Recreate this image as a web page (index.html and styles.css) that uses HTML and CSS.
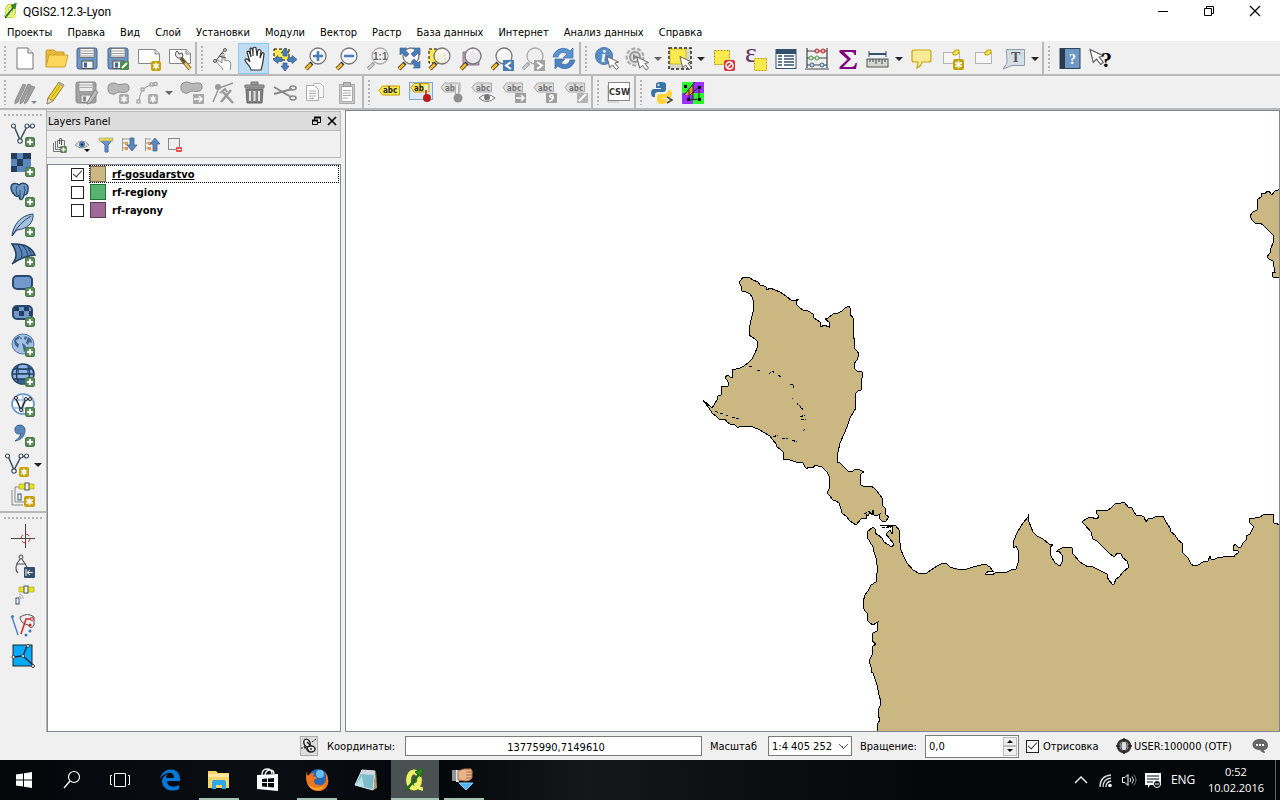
FILE: index.html
```html
<!DOCTYPE html>
<html lang="ru">
<head>
	<meta charset="UTF-8">
	<title>QGIS2.12.3-Lyon</title>
	<link rel="stylesheet" href="styles.css">
</head>
<body>
	<svg class="defs" aria-hidden="true">
		<defs>
			<symbol id="plus" viewBox="0 0 10 10"><rect x=".5" y=".5" width="9" height="9" rx="1.5" fill="#5a8c5a" stroke="#4a7a4a"/><path d="M5 2v6M2 5h6" stroke="#fff" stroke-width="2"/></symbol>
			<symbol id="star" viewBox="0 0 10 10"><rect width="10" height="10" rx="2" fill="#c4a000"/><path d="M5 1.5v7M2 3.2l6 3.6M8 3.2L2 6.8" stroke="#fff" stroke-width="1.5"/></symbol>
			<symbol id="star-off" viewBox="0 0 10 10"><rect width="10" height="10" rx="2" fill="#a8a8a8"/><path d="M5 1.5v7M2 3.2l6 3.6M8 3.2L2 6.8" stroke="#fff" stroke-width="1.5"/></symbol>
			<symbol id="lens" viewBox="0 0 24 24"><path d="M2 22l6-6" stroke="#333" stroke-width="4"/><path d="M2 22l5-5" stroke="#fcbd20" stroke-width="2.5"/><circle cx="14" cy="9" r="8" fill="#f4f4f4" fill-opacity=".85" stroke="#777" stroke-width="1.3"/><path d="M9 8a5 5 0 0 1 9-2" fill="none" stroke="#fff" stroke-width="2"/></symbol>
			<symbol id="lens-off" viewBox="0 0 24 24"><path d="M2 22l6-6" stroke="#999" stroke-width="3.5"/><path d="M2 22l5-5" stroke="#ccc" stroke-width="2"/><circle cx="14" cy="9" r="8" fill="#f0f0f0" stroke="#aaa" stroke-width="1.3"/></symbol>
			<symbol id="floppy" viewBox="0 0 24 24"><rect x="2" y="1" width="20" height="21" rx="2" fill="#6d97c4" stroke="#3f6797"/><rect x="5" y="1.5" width="14" height="9" fill="#fff" stroke="#777"/><path d="M6 4h12M6 6.5h12M6 9h12" stroke="#999"/><rect x="7" y="14" width="11" height="7.5" fill="#f4f4f4" stroke="#555"/><rect x="9" y="15.5" width="3" height="5" fill="#3f6797"/></symbol>
			<symbol id="floppy-off" viewBox="0 0 24 24"><rect x="1" y="1" width="20" height="21" rx="2" fill="#a2a2a2" stroke="#8b8b8b"/><rect x="4" y="1.5" width="14" height="9" fill="#ececec" stroke="#999"/><path d="M5 4h12M5 6.5h12" stroke="#aaa"/><rect x="6" y="14" width="10" height="7.5" fill="#eee" stroke="#888"/><rect x="8" y="15.5" width="3" height="5" fill="#888"/></symbol>
			<symbol id="tag-off" viewBox="0 0 24 24"><path d="M1 6.5L4.5 2H20.5V11H4.5z" fill="#ddd" stroke="#aaa"/><text x="5" y="10" class="t-abc" fill="#777">abc</text></symbol>
			<symbol id="cursor" viewBox="0 0 14 16"><path d="M1 1l3 12 3-3 4 5 2.5-2-4-5 4-1z" fill="#fff" stroke="#555"/></symbol>
			<symbol id="vec" viewBox="0 0 24 24"><path d="M3 3l6 14L16 3.5h5" fill="none" stroke="#3c5064" stroke-width="1.5"/><g fill="#fff" stroke="#3c5064" stroke-width="1.2"><circle cx="2.5" cy="3" r="2"/><circle cx="9" cy="18" r="2.2"/><circle cx="16" cy="3" r="2"/><circle cx="21.5" cy="3" r="2"/></g></symbol>
			<symbol id="down" viewBox="0 0 8 4"><path d="M0 0h8L4 4z" fill="#222"/></symbol>
			<symbol id="down-off" viewBox="0 0 8 4"><path d="M0 0h8L4 4z" fill="#666"/></symbol>
			<symbol id="q" viewBox="0 0 24 24"><ellipse cx="11" cy="12" rx="5.5" ry="8" fill="none" stroke="#8a9a20" stroke-width="5.5"/><ellipse cx="11" cy="12" rx="5.5" ry="8" fill="none" stroke="#e9f26a" stroke-width="4.5"/><path d="M12 15q3 6 8 6" fill="none" stroke="#e9f26a" stroke-width="3.5"/><path d="M5 20L17 5" stroke="#1f6a18" stroke-width="2.5"/><path d="M20 0l-2 9-6-5z" fill="#2f8a20" stroke="#1f6a18"/><path d="M2 18l5 4-4 1z" fill="#1f6a18"/></symbol>
		</defs>
	</svg>

	<div class="window">
		<header class="title-bar">
			<svg class="logo"><use href="#q"/></svg>
			<h1>QGIS2.12.3-Lyon</h1>
			<div class="win-controls">
				<button aria-label="Свернуть"><svg viewBox="0 0 12 12"><path d="M1 6.5h10" stroke="#000"/></svg></button>
				<button aria-label="Окно"><svg viewBox="0 0 12 12"><path d="M1.5 3.5h7v7h-7zM3.5 3.5v-2h7v7h-2" fill="none" stroke="#000"/></svg></button>
				<button aria-label="Закрыть"><svg viewBox="0 0 12 12"><path d="M1 1l10 10M11 1L1 11" stroke="#000" stroke-width="1.2"/></svg></button>
			</div>
		</header>

		<nav class="menu">
			<a href="#">Проекты</a>
			<a href="#">Правка</a>
			<a href="#">Вид</a>
			<a href="#">Слой</a>
			<a href="#">Установки</a>
			<a href="#">Модули</a>
			<a href="#">Вектор</a>
			<a href="#">Растр</a>
			<a href="#">База данных</a>
			<a href="#">Интернет</a>
			<a href="#">Анализ данных</a>
			<a href="#">Справка</a>
		</nav>

		<div class="toolbars">
			<div class="bar">
				<button aria-label="Новый"><svg viewBox="0 0 24 24"><path d="M4 1h11l5 5v16H4z" fill="#fff" stroke="#777"/><path d="M15 1v5h5" fill="#eee" stroke="#777"/></svg></button>
				<button aria-label="Открыть"><svg viewBox="0 0 24 24"><path d="M2 20V4l1-1h7l2 2h8v4" fill="#e8b83a" stroke="#c79a2a"/><path d="M2 20L5 8h19l-3 12z" fill="#fdd75a" stroke="#d0a52e"/></svg></button>
				<button aria-label="Сохранить"><svg><use href="#floppy"/></svg></button>
				<button aria-label="Сохранить как"><svg viewBox="0 0 24 24"><use href="#floppy"/><rect x="14" y="14" width="9" height="9" rx="1.5" fill="#4f8a4f"/><path d="M16 21l5-5" stroke="#fff" stroke-width="2"/></svg></button>
				<button aria-label="Новый макет"><svg viewBox="0 0 24 24"><path d="M1.5 2.5h17l4 4v10h-21z" fill="#fff" stroke="#888"/><path d="M18 2v5h5" fill="#ddd" stroke="#888"/><use href="#star" x="14" y="14" width="10" height="10"/></svg></button>
				<button aria-label="Управление макетами"><svg viewBox="0 0 24 24"><path d="M1.5 2.5h17l4 4v10h-21z" fill="#fff" stroke="#888"/><path d="M18 2v5h5" fill="#ddd" stroke="#888"/><path d="M9 4a4 4 0 1 0 6 5l-1-3-3 1-1-2z" fill="#e8e8e8" stroke="#555"/><path d="M13 11l9 11" stroke="#6b5a30" stroke-width="4"/><path d="M17 16l5 6" stroke="#f0c95a" stroke-width="2.5"/></svg></button>
			</div>
			<div class="bar">
				<button aria-label="Касание"><svg viewBox="0 0 24 24"><path d="M12 23c-1-4-5-5-7-9l2-1 4 3V7q1-2 2 0v6l5 1q3 1 1 9" fill="#fff" stroke="#888"/><path d="M4 15l6-8 4-5M8 9l7 2" fill="none" stroke="#444"/><g fill="#ddd" stroke="#555"><circle cx="14" cy="3" r="1.5"/><circle cx="4" cy="14" r="1.5"/></g></svg></button>
				<button class="on" aria-label="Рука"><svg viewBox="0 0 24 24"><path d="M9 23c0-4-5-6-6-10 1-2 3-1 5 2L5 5c1-2 3-1 4 5L8 2c1-2 3-1 3 7V1c1-1 3-1 3 0l1 8 1-6c1-1 3 0 3 1l-1 7 2-5c1-1 2 0 2 1-1 7-1 10-3 16z" fill="#fff" stroke="#333" stroke-width="1.2"/></svg></button>
				<button aria-label="К выделению"><svg viewBox="0 0 24 24"><path d="M1 2h15v11H1z" fill="#fce94f" stroke="#000" stroke-dasharray="3 2"/><path d="M12 1l4 5h-2v3h-4V6H8zM12 24l4-5h-2v-3h-4v3H8zM0 12.5l5-4v2h4v4H5v2zM24 12.5l-5-4v2h-4v4h4v2z" fill="#4a7cb8" stroke="#32598c" stroke-width=".7"/></svg></button>
				<button aria-label="Увеличить"><svg viewBox="0 0 24 24"><use href="#lens"/><path d="M14 4v10M9 9h10" stroke="#4a7cb8" stroke-width="2.5"/></svg></button>
				<button aria-label="Уменьшить"><svg viewBox="0 0 24 24"><use href="#lens"/><path d="M9 9h10" stroke="#4a7cb8" stroke-width="2.5"/></svg></button>
				<button aria-label="Масштаб 1:1"><svg viewBox="0 0 24 24"><use href="#lens-off"/><text x="7" y="13" class="t-one" fill="#666">1:1</text></svg></button>
				<button aria-label="Полный охват"><svg viewBox="0 0 24 24"><use href="#lens"/><path d="M3 1h7L8 3l4 4-3 3-4-4-2 2zM23 1h-7l2 2-4 4 3 3 4-4 2 2zM23 21h-7l2-2-4-4 3-3 4 4 2-2z" fill="#4a7cb8" stroke="#365f92" stroke-width=".6"/></svg></button>
				<button aria-label="Увеличить до выделенного"><svg viewBox="0 0 24 24"><path d="M1 2h16v14H1z" fill="#fce94f" stroke="#000" stroke-dasharray="3 2"/><use href="#lens"/></svg></button>
				<button aria-label="Увеличить до слоя"><svg viewBox="0 0 24 24"><path d="M4 5h16v13H4z" fill="#b9a9bc" stroke="#8d7a92"/><use href="#lens"/></svg></button>
				<button aria-label="Предыдущий охват"><svg viewBox="0 0 24 24"><use href="#lens"/><rect x="13" y="13" width="11" height="11" fill="#4a7cb8"/><path d="M21 15l-5 3.5 5 3.5" fill="none" stroke="#fff" stroke-width="2"/></svg></button>
				<button aria-label="Следующий охват"><svg viewBox="0 0 24 24"><use href="#lens-off"/><rect x="13" y="13" width="11" height="11" fill="#a4a4a4"/><path d="M16 15l5 3.5-5 3.5" fill="none" stroke="#fff" stroke-width="2"/></svg></button>
				<button aria-label="Обновить"><svg viewBox="0 0 24 24"><path d="M1 10C3 1 13-1 18 4l3-3v10H11l4-4C11 4 7 6 6 10z" fill="#5b93d0" stroke="#3c6ea8" stroke-width=".7"/><path d="M23 13c-2 9-12 11-17 6l-3 3V12h10l-4 4c4 3 8 1 9-3z" fill="#4a82c2" stroke="#3c6ea8" stroke-width=".7"/></svg></button>
			</div>
			<div class="bar">
				<button aria-label="Определить"><svg viewBox="0 0 24 24"><circle cx="9" cy="9" r="8.5" fill="#5a8cc4" stroke="#4677ae"/><text x="6" y="15" class="t-i" fill="#fff">i</text><use href="#cursor" x="11" y="8" width="13" height="16"/></svg></button>
				<button class="wide" aria-label="Действие"><svg viewBox="0 0 24 24"><circle cx="10" cy="10" r="8.500" fill="#e4e4e4" stroke="#aaa" stroke-width="2" stroke-dasharray="4 2"/><circle cx="10" cy="10" r="5" fill="#ddd" stroke="#999" stroke-width="2"/><path d="M8 7l5 3-5 3z" fill="#888"/><use href="#cursor" x="11" y="9" width="13" height="15"/></svg><svg class="drop"><use href="#down-off"/></svg></button>
				<button class="wide" aria-label="Выделить"><svg viewBox="0 0 24 24"><rect x="1" y="1" width="22" height="21" fill="#d8d8c8" stroke="#222" stroke-width="1.5" stroke-dasharray="3 2"/><rect x="2" y="2" width="16" height="15" fill="#fce94f" stroke="#c4a000" stroke-width=".6"/><use href="#cursor" x="11" y="8" width="13" height="16"/></svg><svg class="drop"><use href="#down"/></svg></button>
				<button aria-label="Снять выделение"><svg viewBox="0 0 24 24"><rect x="2.5" y="3.5" width="15" height="14" fill="#fce94f" stroke="#b89800" stroke-dasharray="2 1"/><rect x="12" y="13" width="11" height="11" rx="2" fill="#d9323c"/><circle cx="17.5" cy="18.5" r="3.5" fill="none" stroke="#fff" stroke-width="1.5"/><path d="M15 21l5-5" stroke="#fff" stroke-width="1.5"/></svg></button>
				<button aria-label="Выделить по выражению"><svg viewBox="0 0 24 24"><text x="2" y="15" class="t-eps" fill="#5c3566">ε</text><rect x="11.5" y="11.5" width="12" height="12" fill="#fce94f" stroke="#c4a000" stroke-dasharray="2 1"/></svg></button>
				<button aria-label="Таблица"><svg viewBox="0 0 24 24"><rect x="2" y="2.5" width="20" height="19" fill="#fff" stroke="#31506e"/><path d="M2 5h20" stroke="#31506e" stroke-width="4"/><path d="M4 9h4M10 9h10M4 12h4M10 12h10M4 15h4M10 15h10M4 18h4M10 18h10" stroke="#31506e" stroke-width="1.5"/></svg></button>
				<button aria-label="Калькулятор"><svg viewBox="0 0 24 24"><path d="M2 1v20M22 1v20M2 4h20M2 11h20M2 18h20M0 22h24" stroke="#444" stroke-width="1.2"/><g fill="#f3b1b1" stroke="#c01c1c"><circle cx="12" cy="4" r="2"/><circle cx="18" cy="4" r="2"/></g><g fill="#cdeccd" stroke="#4e9a4e"><circle cx="6" cy="11" r="2"/><circle cx="12" cy="11" r="2"/></g><g fill="#c3dcf3" stroke="#33658f"><circle cx="7" cy="18" r="2"/><circle cx="17" cy="18" r="2"/></g></svg></button>
				<button aria-label="Статистика"><svg viewBox="0 0 24 24"><path d="M3.5 3H20v5h-1.500Q18 5 15 5H8l7 7-8 8h8q4 0 4.500-4H21l-1 6H3.500v-2l8-7.500-8-7z" fill="#800080"/></svg></button>
				<button class="wide" aria-label="Измерить"><svg viewBox="0 0 24 24"><path d="M3 7h17" stroke="#31506e" stroke-width="2"/><path d="M3 4v6M20 4v6" stroke="#31506e"/><rect x="1" y="12" width="21" height="8" fill="#d3d7cf" stroke="#555"/><path d="M4 12v3M7 12v3M10 12v5M13 12v3M16 12v5M19 12v3" stroke="#444"/></svg><svg class="drop"><use href="#down"/></svg></button>
				<button aria-label="Подсказки"><svg viewBox="0 0 24 24"><path d="M4 3h15q2 0 2 2v8q0 2-2 2h-7c0 3-3 5-5 6l1-6H4q-2 0-2-2V5q0-2 2-2z" fill="#f8ea96" stroke="#c9a50a" stroke-width="1.2"/></svg></button>
				<button aria-label="Новая закладка"><svg viewBox="0 0 24 24"><path d="M2.500 5.500h16v11h-16z" fill="#f6f6f6" stroke="#777" stroke-dasharray="1 1"/><path d="M12 5h2V3h4v3l-3 2h-3z" fill="#fce94f" stroke="#c4a000"/><use href="#star" x="12" y="12" width="11" height="11"/></svg></button>
				<button aria-label="Закладки"><svg viewBox="0 0 24 24"><path d="M3.500 5.500h16v11h-16z" fill="#f6f6f6" stroke="#777" stroke-dasharray="1 1"/><path d="M13 5h2V3h4v3l-3 2h-3z" fill="#fce94f" stroke="#c4a000"/></svg></button>
				<button class="wide" aria-label="Аннотация"><svg viewBox="0 0 24 24"><path d="M4.500 2.500h18v16H10L1 22l4-6z" fill="#d5dfe8" stroke="#929ba4"/><text x="9" y="15" class="t-t" fill="#555">T</text></svg><svg class="drop"><use href="#down"/></svg></button>
			</div>
			<div class="bar last">
				<button aria-label="Справка"><svg viewBox="0 0 24 24"><rect x="2" y="1.500" width="20" height="20" fill="#6d97c4" stroke="#31445a"/><rect x="2" y="1.500" width="5" height="20" fill="#2b3b4d"/><text x="11" y="17" class="t-t" fill="#fff">?</text></svg></button>
				<button aria-label="Что это"><svg viewBox="0 0 24 24"><use href="#cursor" x="0" y="1" width="15" height="18"/><text x="12" y="20" class="t-q" fill="#000">?</text></svg></button>
			</div>
		</div>

		<div class="toolbars">
			<div class="bar edit">
				<button aria-label="Правки"><svg viewBox="0 0 24 24"><path d="M2 20l8-17 3 1-8 17-3 2zM7 20l8-17 3 1-8 17-3 2zM12 20l6-15 4 1-8 15-3 2z" fill="#a0a0a0" stroke="#888" stroke-width=".8"/><path d="M18 20h6l-3 3z" fill="#888"/></svg></button>
				<button aria-label="Режим правки"><svg viewBox="0 0 24 24"><path d="M4 17L15 1l5 3L9 20l-6 3z" fill="#f0d630" stroke="#8f7c20"/><path d="M17 3L6 19" stroke="#b89b14"/><path d="M15 1l5 3-1 2-5-3z" fill="#b0b0a8"/><path d="M4 17l5 3-6 3z" fill="#eedfb5" stroke="#777" stroke-width=".6"/></svg></button>
				<button aria-label="Сохранить правки"><svg viewBox="0 0 24 24"><use href="#floppy-off"/><path d="M13 20l7-11 3 2-7 11-4 1z" fill="#bbb" stroke="#888"/></svg></button>
				<button aria-label="Добавить объект"><svg viewBox="0 0 24 24"><path d="M2 7c0-5 6-6 9-4s11-3 12 3-6 6-10 5c-3 0-3 3-7 2s-4-3-4-6z" fill="#b8b8b8" stroke="#8b8b8b"/><use href="#star-off" x="13" y="13" width="10" height="10"/></svg></button>
				<button class="wide" aria-label="Добавить кривую"><svg viewBox="0 0 24 24"><path d="M3 20C4 9 9 6 15 4h6" fill="none" stroke="#999"/><g fill="#ddd" stroke="#999"><rect x="1" y="19" width="3" height="3"/><rect x="5" y="7" width="3" height="3"/><rect x="14" y="2" width="3" height="3"/><rect x="18" y="1.500" width="3" height="3"/></g><use href="#star-off" x="12" y="13" width="10" height="10"/></svg><svg class="drop"><use href="#down-off"/></svg></button>
				<button aria-label="Переместить объект"><svg viewBox="0 0 24 24"><path d="M1 6c0-5 6-6 9-4s11-3 12 3-6 6-10 5c-3 0-3 3-7 2s-4-3-4-6z" fill="#b8b8b8" stroke="#8b8b8b"/><rect x="13" y="13" width="11" height="10" fill="#a8a8a8"/><path d="M14 18h8M19 15l3 3-3 3" fill="none" stroke="#fff" stroke-width="1.500"/></svg></button>
				<button aria-label="Узлы"><svg viewBox="0 0 24 24"><path d="M2 21L8 7 22 2" fill="none" stroke="#999" stroke-width="1.500"/><circle cx="7" cy="6" r="3" fill="#999"/><path d="M10 21L20 9M12 11l10 11" stroke="#999" stroke-width="2.500"/><path d="M9 12l5-4 2 3" fill="none" stroke="#999" stroke-width="2"/></svg></button>
				<button aria-label="Удалить"><svg viewBox="0 0 24 24"><path d="M4 8h17l-1 14H5z" fill="#808080" stroke="#666"/><path d="M8 10v10M12.500 10v10M17 10v10" stroke="#e4e4e4" stroke-width="2"/><path d="M3 4h19v3H3zM9 4V1h7v3" fill="#999" stroke="#777"/></svg></button>
				<button aria-label="Вырезать"><svg viewBox="0 0 24 24"><path d="M1 6l17 10M1 13L19 8" stroke="#888" stroke-width="2"/><ellipse cx="20" cy="7" rx="3" ry="2" fill="none" stroke="#888" stroke-width="1.500"/><ellipse cx="20" cy="17" rx="3" ry="2" fill="none" stroke="#888" stroke-width="1.500"/></svg></button>
				<button aria-label="Копировать"><svg viewBox="0 0 24 24"><path d="M9.500 2.500h7l3 3v11h-10z" fill="#f6f6f6" stroke="#bbb"/><path d="M2.500 4.500h8l4 4v11h-12z" fill="#fff" stroke="#aaa"/><path d="M5 10h7M5 12.500h7M5 15h7M5 17.500h5" stroke="#aaa"/></svg></button>
				<button aria-label="Вставить"><svg viewBox="0 0 24 24"><rect x="4.500" y="3.500" width="15" height="19" fill="#ccc" stroke="#aaa"/><path d="M6.500 5.500h11v15h-11z" fill="#fff" stroke="#aaa"/><rect x="8.500" y="1.500" width="7" height="4" fill="#bbb" stroke="#999"/><path d="M8 9.500h8M8 12h8M8 14.500h8M8 17h5" stroke="#aaa"/></svg></button>
			</div>
			<div class="bar">
				<button aria-label="Подписи"><svg viewBox="0 0 24 24"><path d="M1 9.500L4.500 5H21.500V14H4.500z" fill="#fce94f" stroke="#c4a000"/><text x="5" y="12" class="t-abc" fill="#222">abc</text></svg></button>
				<button aria-label="Выделить подписи"><svg viewBox="0 0 24 24"><rect x=".5" y="1.500" width="23" height="17" fill="#dceaf7" stroke="#7da7dc"/><path d="M2 6.500L5 2.500H20V11H5z" fill="#fce94f" stroke="#c4a000"/><text x="5" y="10" class="t-abc" fill="#222">ab</text><path d="M17 4v11" stroke="#e8e8e8" stroke-width="3"/><path d="M17 9v7" stroke="#b01818" stroke-width="1.500"/><circle cx="18" cy="17" r="4" fill="#b81c1c"/></svg></button>
				<button aria-label="Закрепить подписи"><svg viewBox="0 0 24 24"><path d="M1 6.500L4.500 2H20V11H4.500z" fill="#ddd" stroke="#aaa"/><text x="5" y="10" class="t-abc" fill="#777">ab</text><path d="M17 4v11" stroke="#eee" stroke-width="3"/><path d="M15.500 4v11M18.500 4v11" stroke="#999" stroke-width=".7"/><circle cx="18" cy="17" r="4.500" fill="#909090"/></svg></button>
				<button aria-label="Показать подписи"><svg viewBox="0 0 24 24"><use href="#tag-off"/><path d="M8 17q8-7 16 0-8 7-16 0z" fill="#fff" stroke="#777"/><circle cx="16" cy="16.500" r="3" fill="#777"/></svg></button>
				<button aria-label="Переместить подпись"><svg viewBox="0 0 24 24"><use href="#tag-off"/><rect x="13" y="12" width="11" height="10" fill="#a0a0a0"/><path d="M14 17h8M19 14l3 3-3 3" fill="none" stroke="#fff" stroke-width="1.500"/></svg></button>
				<button aria-label="Повернуть подпись"><svg viewBox="0 0 24 24"><use href="#tag-off"/><rect x="13" y="12" width="11" height="10" fill="#a0a0a0"/><path d="M16 20c5 0 5-7 2-6s0 4 3 2" fill="none" stroke="#fff" stroke-width="1.500"/></svg></button>
				<button aria-label="Изменить подпись"><svg viewBox="0 0 24 24"><use href="#tag-off"/><rect x="13" y="12" width="11" height="10" fill="#b4b4b4"/><path d="M15 20l7-7" stroke="#fff" stroke-width="2"/></svg></button>
			</div>
			<div class="bar">
				<button aria-label="CSW"><svg viewBox="0 0 24 24"><path d="M1 4v17h11" fill="none" stroke="#bbb"/><rect x="1.500" y="1.500" width="21" height="18" fill="#fff" stroke="#888"/><text x="2" y="14" class="t-csw" fill="#333">CSW</text></svg></button>
			</div>
			<div class="bar last">
				<button aria-label="Python"><svg viewBox="0 0 24 24"><path d="M6 8V3q0-2 5-2t5 2v5q0 3-3 3H8q-3 0-3 3v2H3q-2-1-2-4t2-4h8V7H6z" fill="#3775a9"/><path d="M18 9h2q2 1 2 4t-2 4h-8v1h5v2q0 3-5 3t-5-3v-4q0-3 3-3h5q3 0 3-4z" fill="#ffd43b"/><circle cx="8.500" cy="4" r="1" fill="#fff"/><path d="M17 16l5 3-5 3" fill="none" stroke="#444" stroke-width="1.500"/></svg></button>
				<button aria-label="Топология"><svg viewBox="0 0 24 24"><path d="M1 1h11v11H1zM12 12h11v11H12z" fill="#2df52d"/><path d="M12 1h11v11H12zM1 12h11v11H1z" fill="#9b30ff"/><path d="M12 4v10H4z" fill="#ff9030"/><path d="M3 14L14 1M8 19l10-1V6L9 14M8 9v11M12 4v15" fill="none" stroke="#222"/><path d="M3 4h3v3H3zM17 5h3v3h-3zM6 17h3v3H6zM17 17h3v3h-3z" fill="#000"/></svg></button>
			</div>
		</div>

		<main class="work">
			<aside class="side">
				<div class="vbar">
					<button aria-label="Векторный слой"><svg viewBox="0 0 24 24"><use href="#vec"/><use href="#plus" x="14" y="14" width="10" height="10"/></svg></button>
					<button aria-label="Растровый слой"><svg viewBox="0 0 24 24"><rect width="20" height="19" fill="#5d87ba"/><path d="M0 0h6v6H0zM12 0h8v6h-8zM6 6h6v7H6zM0 13h6v6H0z" fill="#243d5c"/><use href="#plus" x="14" y="14" width="10" height="10"/></svg></button>
					<button aria-label="PostGIS"><svg viewBox="0 0 24 24"><path d="M0 5c0-6 6-5 8-3 3-3 10-2 9 4 0 4-1 6-4 6-1 6-5 6-5 0-1 2-4 2-5-1Q1 10 0 5z" fill="#6d97c4" stroke="#29486e" stroke-width="1.500"/><path d="M6 3q-2 4 0 9M13 3q2 4 0 9M9 7v9" fill="none" stroke="#29486e"/><use href="#plus" x="14" y="14" width="10" height="10"/></svg></button>
					<button aria-label="SpatiaLite"><svg viewBox="0 0 24 24"><path d="M1 23C2 12 10 2 22 1c1 9-6 15-16 16z" fill="#a6c1df" stroke="#29486e"/><path d="M1 23Q8 10 20 3" fill="none" stroke="#29486e"/><use href="#plus" x="14" y="14" width="10" height="10"/></svg></button>
					<button aria-label="MSSQL"><svg viewBox="0 0 24 24"><path d="M1 1q18-1 23 11-12 1-23 9Q9 13 1 1z" fill="#5a86ba" stroke="#22405f" stroke-width="1.500"/><path d="M7 2q6 8 3 14M12 3q6 6 4 11M17 5q4 5 3 8" fill="none" stroke="#22405f"/><use href="#plus" x="14" y="14" width="10" height="10"/></svg></button>
					<button aria-label="Oracle"><svg viewBox="0 0 24 24"><rect x="2" y="3" width="19" height="13" rx="4" fill="#7399cc" stroke="#29486e" stroke-width="2"/><use href="#plus" x="14" y="14" width="10" height="10"/></svg></button>
					<button aria-label="Oracle растр"><svg viewBox="0 0 24 24"><rect x="2" y="3" width="19" height="13" rx="4" fill="#7399cc" stroke="#29486e" stroke-width="2"/><path d="M3 4h5v4H3zM13 4h5v4h-5zM8 8h5v5H8zM18 8h3v5h-3z" fill="#243d5c"/><use href="#plus" x="14" y="14" width="10" height="10"/></svg></button>
					<button aria-label="WMS"><svg viewBox="0 0 24 24"><ellipse cx="12" cy="11" rx="11" ry="10" fill="#a3c0e2" stroke="#5079a8"/><path d="M3 7q3-4 6-4l-1 3-3 1 1 3 2 1-1 4-3-3zM14 3l2 1-1 3-2-1zM17 4l3 2 1 4-3-1-1 3-2-2 1-3zM11 10l3 2 2 4-3 3-1-5zM9 4l2 1-1 2z" fill="#3f648f"/><use href="#plus" x="14" y="14" width="10" height="10"/></svg></button>
					<button aria-label="WCS"><svg viewBox="0 0 24 24"><ellipse cx="12" cy="11" rx="11" ry="10" fill="#8fb5e2" stroke="#22405f" stroke-width="1.500"/><path d="M2 6q1-3 5-4v4zM17 2q4 1 5 4h-5zM7 6h10v5H7zM7 16h10v3q-5 3-10 0z" fill="#365f92"/><path d="M3 6h18M1 11h22M3 16h18M7 3q-3 8 0 16M17 3q3 8 0 16" fill="none" stroke="#22405f" stroke-width="1.500"/><path d="M8 7h8v3H8z" fill="#8fb5e2"/><use href="#plus" x="14" y="14" width="10" height="10"/></svg></button>
					<button aria-label="WFS"><svg viewBox="0 0 24 24"><ellipse cx="12" cy="11" rx="11" ry="10" fill="#fff" stroke="#5d8fc4" stroke-width="1.500"/><path d="M1 7h22M1 15h22M12 1v20" stroke="#8fb5e2" stroke-width="1.300"/><path d="M5 6l5 11 5-11h4" fill="none" stroke="#222" stroke-width="1.500"/><g fill="#fff" stroke="#222"><circle cx="5" cy="5" r="1.500"/><circle cx="10" cy="17" r="1.500"/><circle cx="15" cy="6" r="1.500"/><circle cx="19" cy="6" r="1.500"/></g><use href="#plus" x="14" y="14" width="10" height="10"/></svg></button>
					<button aria-label="Текст с разделителями"><svg viewBox="0 0 24 24"><path d="M14 7c0-7-11-6-10 0 0 4 4 5 6 3-1 4-3 6-6 8 7-1 10-6 10-11z" fill="#5a86ba" stroke="#3c6694"/><use href="#plus" x="14" y="14" width="10" height="10"/></svg></button>
					<button class="drop-side" aria-label="Новый слой"><svg viewBox="0 0 24 24"><use href="#vec"/><use href="#star" x="14" y="14" width="10" height="10"/></svg><svg class="drop"><use href="#down"/></svg></button>
					<button aria-label="GPX"><svg viewBox="0 0 24 24"><path d="M1 7v15h11M4 4v15h9M4 4h6" fill="none" stroke="#888"/><rect x="7" y="11" width="3" height="6" fill="#fff" stroke="#31506e"/><path d="M8 1h15v5H8z" fill="#e4e41c" stroke="#a8a838" stroke-width=".7"/><rect x="14" y="0" width="4" height="7" fill="#eee" stroke="#555"/><use href="#star" x="13" y="13" width="11" height="11"/></svg></button>
				</div>
				<div class="vbar">
					<button aria-label="Захват координат"><svg viewBox="0 0 24 24"><path d="M14.500 0v24M0 14.500h24" stroke="#444"/><circle cx="14.500" cy="14.500" r="4.500" fill="none" stroke="#c22" stroke-dasharray="4 3"/></svg></button>
					<button aria-label="DXF"><svg viewBox="0 0 24 24"><circle cx="10" cy="3" r="2" fill="#ddd" stroke="#555"/><path d="M9 5q-7 9-2 14M11 5l5 8M5 10h10" fill="none" stroke="#555" stroke-width="1.200"/><rect x="13" y="13" width="11" height="11" rx="1" fill="#31506e"/><path d="M22 18.500h-6M19 16l-3 2.500 3 2.500M15 15v7" fill="none" stroke="#fff"/></svg></button>
					<button aria-label="GPS"><svg viewBox="0 0 24 24"><path d="M8 3h15v5H8z" fill="#e4e41c" stroke="#a8a838" stroke-width=".7"/><rect x="13" y="2" width="4" height="7" fill="#eee" stroke="#555"/><path d="M8 10q4 0 4 5M8 12q2 0 2 3" fill="none" stroke="#aaa"/><rect x="5" y="14" width="3" height="6" fill="#fff" stroke="#31506e"/></svg></button>
					<button aria-label="Топология"><svg viewBox="0 0 24 24"><path d="M1 3l6 18" stroke="#3f78c2" stroke-width="1.300"/><circle cx="1.500" cy="2.500" r="1.500" fill="#3f78c2"/><path d="M9 3q8-5 14 0v8q-3 5-6 0-8-2-8-8z" fill="#eee" stroke="#555"/><path d="M10 20l5-15h6" fill="none" stroke="#d22" stroke-width="1.500"/><circle cx="21" cy="5" r="1.500" fill="#fff" stroke="#d22"/><circle cx="19" cy="11" r="1.500" fill="#d22"/><circle cx="19" cy="17" r="1.500" fill="#3f78c2"/><circle cx="15" cy="21" r="1.500" fill="#3f78c2"/></svg></button>
					<button aria-label="Граф дорог"><svg viewBox="0 0 24 24"><rect x="2" y="1" width="19" height="21" fill="#00aaff" stroke="#222"/><path d="M2 13l10-1 4-10M12 12l10 9" fill="none" stroke="#222" stroke-width="1.300"/><g fill="#fff" stroke="#444"><circle cx="2.500" cy="13" r="1.500"/><circle cx="12" cy="12" r="1.500"/><circle cx="17" cy="2" r="1.500"/><circle cx="22" cy="22" r="1.500"/></g></svg></button>
				</div>
			</aside>

			<section class="layers">
				<div class="layers-head">
					<h2>Layers Panel</h2>
					<button aria-label="Открепить"><svg viewBox="0 0 10 10"><path d="M3.500 4V1.500h6v5H7M1.500 4.500h5v4h-5z" fill="none" stroke="#000"/><path d="M3 1.500h7M1 4.500h6" stroke="#000" stroke-width="2"/></svg></button>
					<button aria-label="Закрыть панель"><svg viewBox="0 0 10 10"><path d="M1 1l8 8M9 1L1 9" stroke="#000" stroke-width="1.600"/></svg></button>
				</div>
				<div class="layers-tools">
					<button aria-label="Добавить группу"><svg viewBox="0 0 16 16"><path d="M1.500 6v8.500H9M3.500 4v8.500H9M5.500 3.500v7h7v-7z" fill="none" stroke="#777"/><path d="M7.500 7V2q1-2 2 0v6" fill="none" stroke="#555"/><use href="#plus" x="8" y="9" width="7" height="7"/></svg></button>
					<button aria-label="Видимость"><svg viewBox="0 0 16 16"><path d="M0 8q7-8 14 0-7 6-14 0z" fill="#ddd" stroke="#999"/><circle cx="7" cy="7.500" r="3" fill="#4a7cb8"/><circle cx="7" cy="7.500" r="1" fill="#111"/><path d="M9 12h6l-3 3z" fill="#000"/></svg></button>
					<button aria-label="Фильтр"><svg viewBox="0 0 16 16"><path d="M1 2h14l-5 6v7H7V8z" fill="#6593c8" stroke="#42699a"/><path d="M1 1h14v3H1z" fill="#e8d94a" stroke="#999" stroke-width=".6"/></svg></button>
					<button aria-label="Развернуть"><svg viewBox="0 0 16 16"><path d="M1.500 1v13M1 2h9M1 6h4M1 11h4" stroke="#999"/><path d="M4.500 5.500h2v2h-2zM4.500 10.500h2v2h-2z" fill="#fff" stroke="#f57900"/><path d="M9 1h4v7h3l-5 6-5-6h3z" fill="#5b87bc" stroke="#32598c" stroke-width=".7"/></svg></button>
					<button aria-label="Свернуть все"><svg viewBox="0 0 16 16"><path d="M1.500 1v13M1 2h6M1 6h4M1 11h4" stroke="#999"/><path d="M4.500 5.500h2v2h-2zM4.500 10.500h2v2h-2z" fill="#fff" stroke="#f57900"/><path d="M9 14h4V7h3l-5-6-5 6h3z" fill="#5b87bc" stroke="#32598c" stroke-width=".7"/></svg></button>
					<button aria-label="Удалить слой"><svg viewBox="0 0 16 16"><rect x="1.500" y="1.500" width="11" height="11" fill="#eee" stroke="#888"/><rect x="9" y="10" width="6" height="5" rx="1" fill="#ef4b4b"/><path d="M10 12.500h4" stroke="#fff"/></svg></button>
				</div>
				<ul class="tree">
					<li class="current"><input type="checkbox" id="l1" checked><label for="l1"><i class="sw sand"></i><span>rf-gosudarstvo</span></label></li>
					<li><input type="checkbox" id="l2"><label for="l2"><i class="sw green"></i><span>rf-regiony</span></label></li>
					<li><input type="checkbox" id="l3"><label for="l3"><i class="sw violet"></i><span>rf-rayony</span></label></li>
				</ul>
			</section>

			<section class="map">
				<svg viewBox="346 111 933 620" preserveAspectRatio="xMaxYMin slice" shape-rendering="crispEdges">
					<g fill="#cbb782" stroke="#000">
						<!-- полуостров -->
						<path d="M743 277L746 277 750 278 753 280 758 282 760 285 764 286 766 287 767 290 770 288 775 290 780 292 786 296 792 301 796 300 799 299 796 301 797 305 800 308 803 310 808 311 813 314 814 318 817 320 820 322 821 327 824 325 829 327 829 322 825 319 828 318 833 314 838 313 842 311 845 308 849 306 850 308 850 314 853 318 853 326 854 333 853 337 855 340 854 348 857 351 859 354 857 360 854 364 855 369 857 371 861 371 863 373 862 378 861 390 858 391 855 394 855 401 856 408 850 418 848 424 845 432 840 443 838 452 837 462 840 463 843 466 848 471 853 471 855 469 860 470 864 472 862 473 860 475 861 485 865 487 871 486 874 488 877 491 880 495 882 498 882 505 885 508 886 515 889 517 886 521 882 521 879 518 880 514 878 515 876 516 874 515 873 510 872 515 870 512 868 516 866 514 866 518 862 518 856 525 853 523 850 521 847 517 842 513 841 509 839 503 836 501 833 500 830 496 827 493 829 489 830 478 827 472 824 469 822 467 818 466 815 465 813 468 810 467 808 467 807 469 805 467 803 463 800 462 796 462 790 460 783 459 783 452 780 449 777 447 776 444 773 440 770 436 763 432 760 430 753 427 740 426 738 428 735 425 730 424 727 422 725 419 720 420 717 417 712 413 709 408 703 400 712 408 714 405 717 400 718 396 721 395 721 387 728 386 728 382 725 377 728 375 730 377 732 377 732 370 740 368 744 366 748 363 752 359 755 353 757 348 758 342 755 339 749 335 749 330 750 325 751 320 753 312 753 300 752 297 750 294 746 292 742 291 741 286 739 282 741 280z"/>
						<!-- материк -->
						<path d="M877 733V725L880 720 878 715 878 710 880 706 881 702 879 695 877 685 873 673 871 672 871 667 869 661 872 655 872 647 876 644 872 641 873 633 877 631 878 622 873 625 870 623 868 621 867 613 865 611 863 607 863 602 865 595 868 591 871 585 876 582 877 573 877 565 876 558 874 552 873 547 870 542 867 537 867 532 873 527 875 529 875 533 878 535 882 538 884 542 887 544 892 547 894 544 889 538 886 534 890 530 892 534 893 527 887 526 880 525 896 526 899 530 900 543 901 550 903 555 907 563 913 570 920 574 927 573 931 570 937 566 941 564 946 563 950 567 960 570 967 569 973 567 985 564 990 567 993 571 989 571 985 574 992 575 995 573 1000 572 1007 572 1011 570 1016 569 1018 563 1019 555 1018 550 1016 546 1014 548 1013 544 1014 540 1017 533 1023 523 1028 517V514L1029 522 1033 532 1037 536 1043 539 1049 544 1053 545 1050 547 1050 552 1051 556 1055 563 1060 566 1062 562 1062 555 1059 551 1056 552 1058 550 1062 548 1067 547 1072 548 1073 554 1080 562 1088 567 1091 566 1097 569 1107 574 1107 577 1109 580 1112 584 1114 584 1116 579 1119 577 1123 572 1129 567 1127 561 1123 558 1121 554 1117 553 1115 556 1113 556 1110 554 1103 547 1097 541 1093 539 1091 532 1085 525 1082 522 1086 519 1090 517 1097 519 1099 516 1096 513 1096 511 1102 510 1107 511 1111 508 1116 503 1120 504 1122 502 1125 503 1128 507 1132 508 1134 512 1136 515 1140 515 1144 517 1146 522 1149 518 1153 518 1157 516 1163 516 1166 522 1170 528 1171 532 1175 535 1178 540 1182 543 1183 553 1188 558 1191 564 1194 566 1198 565 1203 562 1208 561 1210 556 1211 559 1213 560 1217 558 1230 556 1234 557 1235 555 1238 553 1238 551 1233 550 1233 547 1235 544 1238 547 1241 547 1243 543 1246 540 1246 536 1250 534 1253 528 1253 526 1249 522 1249 519 1255 518 1260 517 1263 515 1268 514 1271 515 1273 514 1274 523 1281 525V733z"/>
						<!-- северо-восток -->
						<path d="M1281 189L1275 191 1272 195 1269 191 1267 191 1265 194 1262 193 1261 197 1257 200 1257 210 1253 212 1250 216 1252 220 1256 224 1260 223 1263 225 1268 230 1273 235 1273 243 1271 248 1270 253 1267 257 1269 259 1273 261 1275 272 1272 272 1273 277 1281 277z"/>
					</g>
					<path d="M749 366h3M757 370h3M769 374l3-3 3 2M778 375l3 2M790 385l3-1v5M792 398h1M797 403v2M799 405l5 6M800 417l5-2M801 420l5-1M803 431l3-3M773 437l5-2M782 438l6 1M792 440l5 2M715 411l4 2M720 413h3M726 415h2M732 417l8 2M1279 508v5M864 514l6-3M882 527l9 1" fill="none" stroke="#000" stroke-dasharray="3 1"/>
				</svg>
			</section>
		</main>

		<footer class="status">
			<button class="toggle" aria-label="Слежение"><svg viewBox="0 0 16 16"><ellipse cx="6" cy="5" rx="3" ry="4" fill="#eee" stroke="#222" stroke-width="1.500" transform="rotate(-25 6 5)"/><ellipse cx="10" cy="11" rx="4" ry="3" fill="#eee" stroke="#222" stroke-width="1.500"/><circle cx="10" cy="11" r="1" fill="#222"/><path d="M3 8l5 5M6 4l4 4" stroke="#222" stroke-width="1.500"/><path d="M11 4l4-3M0 10h4" stroke="#222" stroke-dasharray="2 1"/></svg></button>
			<label for="coord">Координаты:</label>
			<input type="text" id="coord" value="13775990,7149610">
			<label for="scale">Масштаб</label>
			<select id="scale"><option>1:4 405 252</option></select>
			<label for="rot">Вращение:</label>
			<div class="spin">
				<input type="text" id="rot" value="0,0">
				<button class="up" aria-label="Больше"></button>
				<button class="dn" aria-label="Меньше"></button>
			</div>
			<input type="checkbox" id="render" checked>
			<label for="render">Отрисовка</label>
			<button class="crs"><svg viewBox="0 0 16 16"><circle cx="8" cy="8" r="6" fill="#aaa" stroke="#333" stroke-width="2.500"/><ellipse cx="8" cy="8" rx="3" ry="5" fill="#ddd" stroke="#444"/><path d="M0 8h4M12 8h4M8 0v4M8 12v4" stroke="#222" stroke-width="1.500"/></svg><span>USER:100000 (OTF)</span></button>
			<button class="msg" aria-label="Сообщения"><svg viewBox="0 0 16 16"><path d="M8 1c10 0 10 11 4 11l1 3c-2 0-4-1-5-3C-2 12-2 1 8 1z" fill="#666"/><path d="M4 7h2M7 7h2M10 7h2" stroke="#fff" stroke-width="2"/></svg></button>
		</footer>
	</div>

	<div class="taskbar">
		<button class="sys" aria-label="Пуск"><svg viewBox="0 0 24 24"><path d="M4 6.500l7-1v6H4zM12 5.300l8-1.300v7.500h-8zM4 12.500h7v6l-7-1zM12 12.500h8V20l-8-1.300z" fill="#fff"/></svg></button>
		<button class="sys" aria-label="Поиск"><svg viewBox="0 0 24 24"><circle cx="14" cy="9" r="5.500" fill="none" stroke="#fff" stroke-width="1.200"/><path d="M10 13l-6 7" stroke="#fff" stroke-width="1.300"/></svg></button>
		<button class="sys" aria-label="Задачи"><svg viewBox="0 0 24 24"><path d="M6.500 5.500h11v13h-11zM4 7.500H2.500v9H4M20 7.500h1.500v9H20" fill="none" stroke="#fff"/></svg></button>
		<button class="app" aria-label="Edge"><svg viewBox="0 0 24 24"><path d="M2 11C4-1 21-2 22 10v3H9c0 6 7 7 12 4v4C13 25 4 21 4 13c0-3 3-6 6-7-2 2-2 3-2 4h8c0-8-10-6-14 1z" fill="#0078d7"/></svg></button>
		<button class="app run" aria-label="Проводник"><svg viewBox="0 0 24 24"><path d="M1 3h8l2 2h11v15H1z" fill="#f8d56b"/><path d="M1 6h21v3H1z" fill="#ffe9a0"/><path d="M5 21v-7q0-2 2-2h10q2 0 2 2v7h-4v-4H9v4z" fill="#2fa8e8"/></svg></button>
		<button class="app" aria-label="Магазин"><svg viewBox="0 0 24 24"><path d="M1 7l21-1v17L1 21z" fill="#fff"/><path d="M6 7q0-6 5-6t5 5M9 7q1-5 5-5t4 4" fill="none" stroke="#fff" stroke-width="1.300"/><path d="M6 11l5-.5v3.500H6zM12 10.400l6-.5V14h-6zM6 15h5v4l-5-.5zM12 15h6v4.600l-6-.5z" fill="#05080a"/></svg></button>
		<button class="app run" aria-label="Firefox"><svg viewBox="0 0 24 24"><circle cx="13" cy="11" r="10" fill="#2a68b4"/><circle cx="15" cy="6" r="4" fill="#65bdf0"/><path d="M2 3q0 3 1 5c1-2 3-3 6-3l-1 4c2-1 5 0 3 2-4 1-2 6 3 6 5 1 9-4 6-13 6 7 4 19-7 19C3 23-1 12 2 3z" fill="#ee7420"/><path d="M2 14c3 6 11 8 18 3-3 8-15 7-18-3z" fill="#f9a42c"/></svg></button>
		<button class="app" aria-label="Блокнот"><svg viewBox="0 0 24 24"><path d="M22 3l1 17-4 2z" fill="#b59b68"/><path d="M8 2l13 1-2 19-18-5z" fill="#7fbccb" stroke="#d7eef2"/><path d="M8 2l13 1-1 4L6 6z" fill="#d0dadd"/><path d="M8 8l-6 9 8 2z" fill="#b8e2ea"/></svg></button>
		<button class="app run active" aria-label="QGIS"><svg><use href="#q"/></svg></button>
		<button class="app run" aria-label="Загрузки"><svg viewBox="0 0 24 24"><path d="M0 2h5v11H0z" fill="#8b949c"/><path d="M4 2h3v12H4z" fill="#e4e4e4"/><path d="M6 3l6-2h7q2 2 1 5v4q-2 3-6 3L6 12z" fill="#e9b48a" stroke="#a86c48"/><path d="M14 4h6M14 7h6M14 10h5" stroke="#a86c48"/><path d="M7 15h14l-7 7z" fill="#4db4f4" stroke="#8ed2ff"/></svg></button>
		<div class="tray">
			<button aria-label="Скрытые значки"><svg viewBox="0 0 16 16"><path d="M2 11l6-6 6 6" fill="none" stroke="#fff" stroke-width="1.300"/></svg></button>
			<button aria-label="Сеть"><svg viewBox="0 0 16 16"><path d="M3 15Q3 4 14 3M6 15q0-8 8-9M9 15q0-5 5-6" fill="none" stroke="#ddd" stroke-width="1.300"/><circle cx="13" cy="13.500" r="1.800" fill="#fff"/></svg></button>
			<button aria-label="Звук"><svg viewBox="0 0 16 16"><path d="M1.500 5.500H4l3-3v11l-3-3H1.500z" fill="none" stroke="#fff"/><path d="M9 6q1.500 2 0 4M11 4.500q3 3.500 0 7" fill="none" stroke="#ddd"/><path d="M13 3q4 5 0 10" fill="none" stroke="#777"/></svg></button>
			<button aria-label="Уведомления"><svg viewBox="0 0 16 16"><path d="M0 1h16v12H5l-2 3v-3H0z" fill="#fff"/><path d="M2 4h12M2 7h12M2 10h6" stroke="#05080a"/><circle cx="12" cy="12" r="3.500" fill="#05080a" stroke="#fff"/><path d="M10 12h4" stroke="#fff"/></svg></button>
			<span class="lang">ENG</span>
			<div class="clock"><time>0:52</time><time>10.02.2016</time></div>
		</div>
	</div>
</body>
</html>
```

FILE: styles.css
```css
*{
	margin: 0;
	padding: 0;
	box-sizing: border-box;
}
html, body{
	height: 100%;
}
body{
	display: flex;
	flex-direction: column;
	background: #f0f0f0;
	font: 11px/14px "DejaVu Sans Condensed", "Noto Sans", sans-serif;
	color: #000;
	overflow: hidden;
}
button{
	border: 0;
	background: none;
	font: inherit;
	color: inherit;
	display: flex;
	align-items: center;
	justify-content: center;
	flex: none;
}
svg{
	display: block;
	flex: none;
}
.defs{
	position: absolute;
	width: 0;
	height: 0;
}
.window{
	flex: 1;
	min-height: 0;
	display: flex;
	flex-direction: column;
}

/* title + menu */
.title-bar{
	height: 22px;
	background: #fff;
	display: flex;
	align-items: center;
	padding-left: 3px;
}
.logo{
	width: 16px;
	height: 16px;
	margin-right: 4px;
}
.title-bar h1{
	font: 12px/22px Roboto, sans-serif;
	padding-top: 2px;
	flex: 1;
}
.win-controls{
	display: flex;
	padding-right: 2px;
}
.win-controls button{
	width: 46px;
	height: 22px;
}
.win-controls svg{
	width: 12px;
	height: 12px;
}
.menu{
	height: 20px;
	background: #fff;
	border-bottom: 1px solid #f0f0f0;
	display: flex;
}
.menu a{
	color: #000;
	text-decoration: none;
	line-height: 22px;
	padding: 0 8px 0 7px;
}

/* toolbars */
.toolbars{
	height: 34px;
	display: flex;
	border-bottom: 2px solid #b9b9b9;
}
.bar{
	display: flex;
	align-items: center;
	padding-left: 10px;
	padding-top: 1px;
	position: relative;
	border-right: 2px solid #b9b9b9;
}
.bar:first-child{
	padding-left: 9px;
}
.bar.last{
	flex: 1;
	border-right: 0;
}
.bar:before{
	content: "";
	position: absolute;
	left: 4px;
	top: 4px;
	bottom: 3px;
	width: 2px;
	background: repeating-linear-gradient(#b4b4b4 0 2px, transparent 2px 4px);
}
.bar button{
	width: 31px;
	height: 31px;
}
.bar button.wide{
	width: 43px;
	gap: 5px;
}
.bar svg, .vbar svg{
	width: 24px;
	height: 24px;
	overflow: visible;
}
.bar svg.drop, .vbar svg.drop{
	width: 8px;
	height: 4px;
}
.bar button.on{
	background: #c0dcf3;
	border: 1px solid #90c8f6;
}
.t-abc{
	font: bold 8px "DejaVu Sans Condensed", sans-serif;
}
.t-one{
	font: bold 10px "Liberation Sans", sans-serif;
}
.t-i{
	font: italic bold 17px "Liberation Serif", serif;
}
.t-eps{
	font: 28px "Liberation Serif", serif;
}
.t-t{
	font: bold 14px "Liberation Serif", serif;
}
.t-q{
	font: bold 22px "Liberation Serif", serif;
}
.t-csw{
	font: bold 9px "DejaVu Sans Condensed", sans-serif;
}

/* work area */
.work{
	flex: 1;
	min-height: 0;
	display: flex;
}
.side{
	width: 47px;
	border-right: 1px solid #b4b4b4;
}
.vbar{
	position: relative;
	padding-top: 10px;
	padding-bottom: 1px;
	border-bottom: 2px solid #b9b9b9;
}
.vbar:last-child{
	padding-top: 8px;
	border-bottom: 0;
}
.vbar:before{
	content: "";
	position: absolute;
	left: 4px;
	right: 3px;
	top: 4px;
	height: 2px;
	background: repeating-linear-gradient(90deg, #b4b4b4 0 2px, transparent 2px 4px);
}
.vbar button{
	width: 46px;
	height: 30px;
}
.vbar .drop-side{
	gap: 5px;
}
.layers{
	width: 294px;
	display: flex;
	flex-direction: column;
}
.layers-head{
	height: 20px;
	margin-top: 1px;
	display: flex;
	align-items: center;
	background: #dcdcdc;
	border: 1px solid #b9b9b9;
	border-left: 0;
}
.layers-head h2{
	flex: 1;
	font: inherit;
	padding: 2px 0 0 1px;
}
.layers-head button{
	width: 16px;
	height: 16px;
}
.layers-head svg{
	width: 10px;
	height: 10px;
}
.layers-tools{
	height: 27px;
	display: flex;
	align-items: center;
	padding: 2px 0 0 1px;
	border: 1px solid #b9b9b9;
	border-width: 0 1px 1px 0;
}
.layers-tools button{
	width: 23px;
	height: 24px;
}
.layers-tools svg{
	width: 16px;
	height: 16px;
}
.tree{
	flex: 1;
	margin-top: 6px;
	list-style: none;
	background: #fff;
	border: 1px solid #828790;
}
.tree li{
	display: flex;
	align-items: center;
	height: 18px;
	padding: 0 1px 0 23px;
	font-weight: bold;
}
.tree label{
	flex: 1;
	height: 18px;
	margin-left: 5px;
	display: flex;
	align-items: center;
	border: 1px solid transparent;
}
.tree .current label{
	border: 1px dotted #000;
}
.tree span{
	padding-top: 2px;
}
.current span{
	text-decoration: underline;
}
.sw{
	width: 16px;
	height: 16px;
	margin-right: 6px;
	border: 1px solid #555;
}
.sand{
	background: #cbb782;
	border-color: #7f7147;
}
.green{
	background: #55b56c;
	border-color: #23743a;
}
.violet{
	background: #a06a98;
	border-color: #5c3b57;
}
input[type="checkbox"]{
	appearance: none;
	width: 13px;
	height: 13px;
	flex: none;
	background: #fff;
	border: 1px solid #222;
	display: grid;
	place-items: center;
}
input[type="checkbox"]:checked:before{
	content: "";
	width: 8px;
	height: 4px;
	margin-bottom: 3px;
	border: solid #333;
	border-width: 0 0 1px 1px;
	transform: rotate(-48deg);
}
.map{
	flex: 1;
	min-width: 0;
	margin-left: 4px;
	background: #fff;
	border: 1px solid #828790;
	overflow: hidden;
}
.map svg{
	width: 100%;
	height: 100%;
}

/* status bar */
.status{
	height: 28px;
	display: flex;
	align-items: center;
	justify-content: flex-end;
	padding-right: 12px;
}
.toggle{
	width: 18px;
	height: 20px;
	border: 1px solid #aaa;
	background: #ddd;
	margin-right: 9px;
}
.status svg{
	width: 16px;
	height: 16px;
}
.status label, .status span{
	flex: none;
	white-space: nowrap;
	padding-top: 2px;
}
.status label[for="coord"]{
	width: 78px;
}
.status label[for="scale"]{
	width: 58px;
}
.status label[for="rot"]{
	width: 65px;
}
.status label[for="render"]{
	width: 73px;
	margin-left: 4px;
}
#coord, #scale, .spin{
	border: 1px solid #7a7a7a;
	background: #fff;
	font: inherit;
	color: #000;
}
#coord{
	width: 297px;
	height: 20px;
	padding: 2px 0 0 5px;
	text-align: center;
	margin-right: 8px;
}
#scale{
	appearance: none;
	width: 84px;
	height: 20px;
	padding: 2px 0 0 3px;
	margin-right: 8px;
	border-radius: 0;
	background-image: linear-gradient(45deg, transparent 45%, #555 45% 60%, transparent 60%), linear-gradient(-45deg, transparent 45%, #555 45% 60%, transparent 60%);
	background-size: 5px 5px;
	background-position: 70px 7px, 74px 7px;
	background-repeat: no-repeat;
}
.spin{
	width: 94px;
	height: 23px;
	margin-right: 7px;
	padding: 1px;
	display: grid;
	grid-template-columns: 1fr 14px;
	grid-template-rows: 1fr 1fr;
}
.spin input{
	grid-row: 1 / 3;
	min-width: 0;
	border: 0;
	font: inherit;
	padding: 2px 0 0 2px;
}
.spin button{
	border: 1px solid #bbb;
	background: #f0f0f0;
}
.spin button:before{
	content: "";
	border: 3px solid transparent;
}
.spin .up:before{
	border-top: 0;
	border-bottom-color: #000;
}
.spin .dn:before{
	border-bottom: 0;
	border-top-color: #000;
}
.crs{
	gap: 2px;
	width: 136px;
	justify-content: flex-start;
	white-space: nowrap;
}

/* taskbar */
.taskbar{
	height: 40px;
	display: flex;
	background: linear-gradient(90deg, #04070a, #0a0e12 20%, #04070a 34%, #14181b 46%, #0a0e11 60%, #04070a 75%);
	color: #fff;
	font: 12px/16px "Open Sans", sans-serif;
}
.taskbar svg{
	width: 24px;
	height: 24px;
}
.sys{
	width: 48px;
}
.app{
	width: 48px;
	margin-right: 1px;
	position: relative;
}
.sys + .app{
	margin-left: 2px;
}
.run:after{
	content: "";
	position: absolute;
	left: 4px;
	right: 4px;
	bottom: 0;
	height: 2px;
	background: #a5c3ae;
}
.active{
	background: #4b5052;
}
.active:after{
	left: 0;
	right: 0;
}
.tray{
	margin-left: auto;
	display: flex;
	align-items: center;
	margin-right: 4px;
	padding-right: 11px;
	border-right: 1px solid #666;
}
.tray button{
	width: 24px;
	height: 40px;
}
.tray .tray-ico, .tray svg{
	width: 16px;
	height: 16px;
}
.lang{
	margin-left: 6px;
	width: 37px;
}
.clock{
	font-size: 11px;
	display: flex;
	flex-direction: column;
	text-align: center;
}
```
